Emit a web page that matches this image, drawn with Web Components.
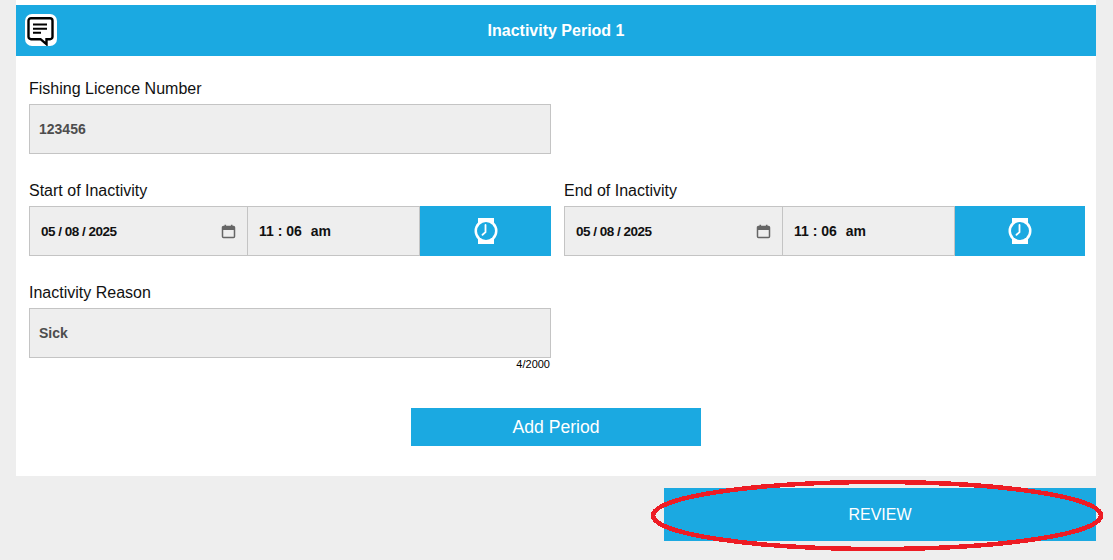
<!DOCTYPE html>
<html lang="en">
<head>
<meta charset="utf-8">
<title>Inactivity Period</title>
<style>
  html, body { margin: 0; height: 100%; }
  body { background: #eeeeee; font-family: 'Liberation Sans', Arial, sans-serif; color: #111; overflow: hidden; }
</style>
</head>
<body>
<inactivity-page>
  <period-panel title-text="Inactivity Period 1">
    <form-row>
      <form-field label="Fishing Licence Number"><text-box>123456</text-box></form-field>
    </form-row>
    <form-row>
      <form-field label="Start of Inactivity"><date-time date="05 / 08 / 2025" time="11 : 06" ampm="am"></date-time></form-field>
      <form-field label="End of Inactivity"><date-time date="05 / 08 / 2025" time="11 : 06" ampm="am"></date-time></form-field>
    </form-row>
    <form-row>
      <form-field label="Inactivity Reason" counter="4/2000"><text-box>Sick</text-box></form-field>
    </form-row>
    <add-button>Add Period</add-button>
  </period-panel>
  <review-button>REVIEW</review-button>
</inactivity-page>

<script>
(function () {
  const BLUE = '#1ba9e1', LINE = '#c4c4c4', FIELD = '#eeeeee';

  function define(name, css, html, setup) {
    customElements.define(name, class extends HTMLElement {
      connectedCallback() {
        if (this._init) return; this._init = true;
        const root = this.attachShadow({ mode: 'open' });
        root.innerHTML = `<style>${css}</style>${typeof html === 'function' ? html(this) : html}`;
        if (setup) setup(this, root);
      }
    });
  }

  define('inactivity-page',
    `:host { display:flex; flex-direction:column; padding:0 17px 0 16px; }`,
    `<slot></slot>`);

  define('period-panel',
    `:host { display:block; background:#fff; padding-top:5px; height:476px; box-sizing:border-box; }
     header { height:51px; background:${BLUE}; display:flex; align-items:center; justify-content:center; position:relative;
              color:#fff; font-weight:700; font-size:16px; }
     .logo { position:absolute; left:9px; top:9px; width:32px; height:32px; background:#fff; border-radius:7px; display:block; }
     .body { display:flex; flex-direction:column; padding:24px 11px 0 13px; }`,
    (el) => `<header>
        <svg class="logo" viewBox="0 0 32 32" aria-hidden="true">
          <path d="M6 4.200h19a2.500 2.500 0 0 1 2.500 2.500v16a2.500 2.500 0 0 1-2.500 2.500h-3.500v5l-6-5H6a2.500 2.500 0 0 1-2.500-2.500v-16A2.500 2.500 0 0 1 6 4.200z" fill="none" stroke="#000" stroke-width="2.400" stroke-linejoin="miter"/>
          <path d="M8 9.500h14v2H8zM8 13.700h14v2H8zM8 17.800h8v2H8z" fill="#000"/>
        </svg>
        <span>${el.getAttribute('title-text')}</span>
      </header>
      <div class="body"><slot></slot></div>`);

  define('form-row',
    `:host { display:grid; grid-template-columns:522px 521px; column-gap:13px; margin-bottom:28px; }`,
    `<slot></slot>`);

  define('form-field',
    `:host { display:block; min-width:0; }
     label { display:block; font-size:16px; line-height:18px; color:#111; margin-bottom:6px; }
     .count { font-size:11px; font-weight:400; line-height:13px; text-align:right; color:#000; padding-right:1px; }
     .wrap { display:block; }`,
    (el) => `<label>${el.getAttribute('label')}</label><div class="wrap"><slot></slot></div>` +
      (el.hasAttribute('counter') ? `<div class="count">${el.getAttribute('counter')}</div>` : ''),
    (el) => { if (el.hasAttribute('counter')) el.style.marginBottom = '-13px'; });

  define('text-box',
    `:host { display:flex; align-items:center; box-sizing:border-box; height:50px; background:${FIELD}; border:1px solid ${LINE};
             padding-left:9px; padding-bottom:1px; font-weight:700; font-size:14px; color:#4d4d4d; }`,
    `<slot></slot>`);

  define('date-time',
    `:host { display:flex; box-sizing:border-box; height:50px; font-weight:700; font-size:14px; color:#111; }
     .seg { display:flex; align-items:center; box-sizing:border-box; background:${FIELD}; border:1px solid ${LINE}; }
     .date { width:219px; padding:0 11px; justify-content:space-between; font-size:13.500px; letter-spacing:-.5px; }
     .time { width:172px; border-left:0; padding-left:11px; gap:9px; white-space:pre; }
     .btn { flex:1; background:${BLUE}; display:flex; align-items:center; justify-content:center; }
     .cal { width:15px; height:15px; display:block; }
     .watch { width:26px; height:26px; display:block; }`,
    (el) => `<div class="seg date"><span>${el.getAttribute('date')}</span>
        <svg class="cal" viewBox="0 0 15 15" aria-hidden="true">
          <path d="M1.500 3.500a1 1 0 0 1 1-1h10a1 1 0 0 1 1 1v9a1 1 0 0 1-1 1h-10a1 1 0 0 1-1-1z" fill="none" stroke="#666" stroke-width="1.500"/>
          <path d="M1.500 3h12v3h-12zM3.500 .8h1.600v2.500H3.500zM9.900 .8h1.600v2.500H9.900z" fill="#666"/>
        </svg></div>
      <div class="seg time"><span>${el.getAttribute('time')}</span><span>${el.getAttribute('ampm')}</span></div>
      <div class="btn">
        <svg class="watch" viewBox="0 0 26 26" aria-hidden="true">
          <rect x="5" y="0" width="16" height="26" fill="#fff"/>
          <circle cx="13" cy="13" r="11.500" fill="#fff"/>
          <circle cx="13" cy="13" r="9" fill="${BLUE}"/>
          <path d="M12.500 7v7.200l-3 2.600" fill="none" stroke="#fff" stroke-width="1.800" stroke-linecap="round"/>
        </svg>
      </div>`);

  define('add-button',
    `:host { display:flex; align-items:center; justify-content:center; align-self:center; box-sizing:border-box; width:290px; height:38px;
             margin:22px 0 0 -3px; padding-left:1px; background:${BLUE}; color:#fff; font-size:17.600px; }`,
    `<slot></slot>`);

  define('review-button',
    `:host { display:flex; align-items:center; justify-content:center; align-self:flex-end; position:relative; box-sizing:border-box;
             width:432px; height:53px; margin-top:12px; background:${BLUE}; color:#fff; font-size:16px; }
     svg { position:absolute; left:-13px; top:-8px; width:452px; height:71px; overflow:visible; pointer-events:none; }`,
    `<slot></slot>
     <svg viewBox="0 0 452 71" shape-rendering="crispEdges" aria-hidden="true">
       <ellipse cx="226" cy="35.500" rx="224" ry="33.500" fill="none" stroke="#ed1c24" stroke-width="4.500"/>
     </svg>`);
})();
</script>
</body>
</html>
